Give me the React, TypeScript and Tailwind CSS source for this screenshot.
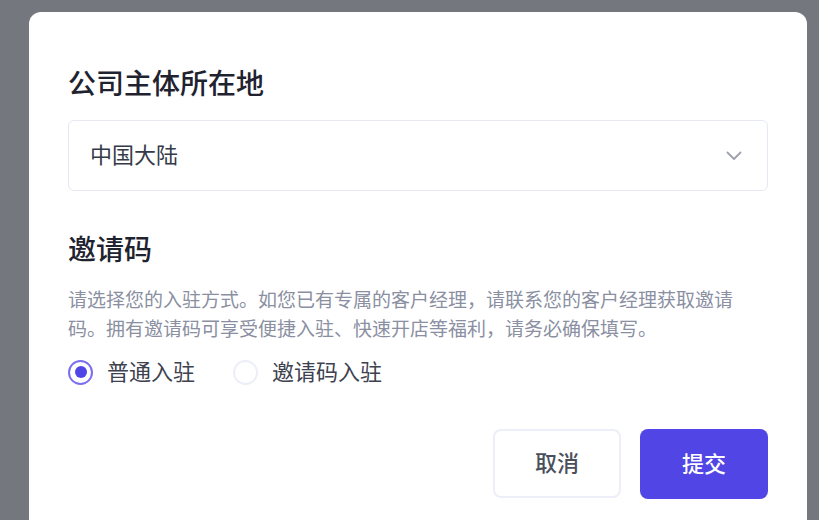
import { useState } from 'react';

type Mode = 'normal' | 'invite';

function Radio({ checked, label, onClick }: { checked: boolean; label: string; onClick: () => void }) {
  return (
    <button type="button" onClick={onClick} className="flex items-center gap-[14px]">
      <span
        className={
          checked
            ? 'flex size-[25px] items-center justify-center rounded-full border-2 border-[#7a6ff0]'
            : 'flex size-[25px] items-center justify-center rounded-full border-2 border-[#eceef8]'
        }
      >
        {checked && <span className="size-[12px] rounded-full bg-[#4f46e5]" />}
      </span>
      <span className="text-[22px] leading-[28px] text-[#3d4150]">{label}</span>
    </button>
  );
}

export default function App() {
  const [mode, setMode] = useState<Mode>('normal');

  return (
    <div
      className="h-[520px] w-[819px] overflow-hidden bg-[#75777f] pt-[12px] pl-[29px]"
      style={{ fontFamily: 'Inter, "Noto Sans CJK SC", sans-serif' }}
    >
      <div className="flex w-[778px] flex-col rounded-[12px] bg-white px-[39px] pt-[54px] pb-[40px]">
        {/* Location */}
        <h2 className="text-[28px] leading-[36px] font-medium text-[#1f2330]">公司主体所在地</h2>
        <button
          type="button"
          className="mt-[18px] flex h-[71px] items-center justify-between rounded-[6px] border border-[#e6e8f4] pr-[25px] pl-[21px]"
        >
          <span className="text-[22px] text-[#353a48]">中国大陆</span>
          <svg width="16" height="10" viewBox="0 0 16 10" fill="none">
            <path d="M1.5 1.5L8 8L14.5 1.5" stroke="#9ea1ad" strokeWidth="1.8" strokeLinecap="round" strokeLinejoin="round" />
          </svg>
        </button>

        {/* Invite code */}
        <h2 className="mt-[41px] text-[28px] leading-[36px] font-medium text-[#1f2330]">邀请码</h2>
        <p className="mt-[18px] text-[19px] leading-[29px] text-[#8a8fa2]">
          请选择您的入驻方式。如您已有专属的客户经理，请联系您的客户经理获取邀请码。拥有邀请码可享受便捷入驻、快速开店等福利，请务必确保填写。
        </p>
        <div className="mt-[14px] flex items-center gap-[38px]">
          <Radio checked={mode === 'normal'} label="普通入驻" onClick={() => setMode('normal')} />
          <Radio checked={mode === 'invite'} label="邀请码入驻" onClick={() => setMode('invite')} />
        </div>

        {/* Actions */}
        <div className="mt-[43px] flex justify-end gap-[19px]">
          <button
            type="button"
            className="h-[69px] w-[128px] rounded-[8px] border-2 border-[#eceef8] text-[22px] font-medium text-[#4a4f5c]"
          >
            取消
          </button>
          <button type="button" className="h-[70px] w-[128px] rounded-[8px] bg-[#5145e5] text-[22px] font-medium text-white">
            提交
          </button>
        </div>
      </div>
    </div>
  );
}
